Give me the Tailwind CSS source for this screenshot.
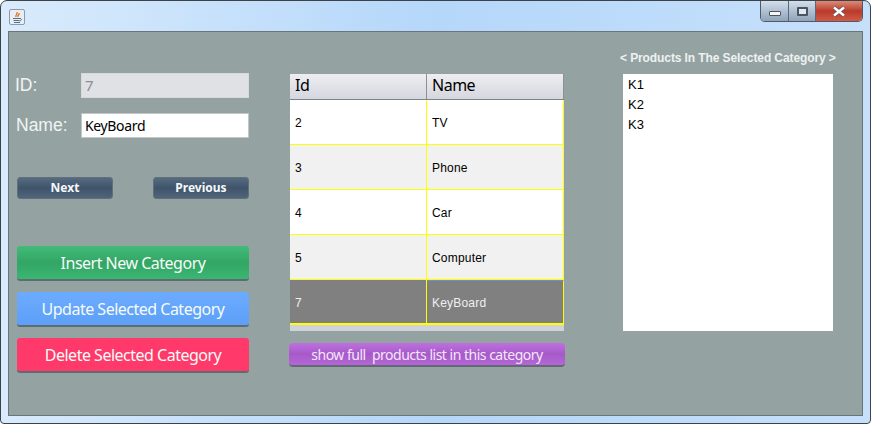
<!DOCTYPE html>
<html>
<head>
<meta charset="utf-8">
<script src="https://cdn.jsdelivr.net/npm/@tailwindcss/browser@4"></script>
</head>
<body class="m-0 overflow-hidden bg-white">
<div class="w-[871px] h-[424px] flex flex-col rounded-t-[7px] rounded-b-[4px] border border-[#3c4247] bg-linear-to-r from-[#d9ebfc] via-[#b5d7fa] to-[#c6e0fb] font-['Liberation_Sans',sans-serif]">
  <div class="h-[30px] shrink-0 flex justify-between pl-[8px] pr-[7px]">
    <div class="mt-[8px] w-[16px] h-[16px] rounded-[2px] border border-[#8a9bac] bg-[#e8eef3] flex items-center justify-center">
      <svg width="12" height="13" viewBox="0 0 12 13"><path d="M6 1 C7 3 4 4 5 6 M8 2 C9 4 6 4 7 6" stroke="#e0701a" stroke-width="1.3" fill="none"/><path d="M2 7.500h7M2.500 9.500h6M3 11.500h6" stroke="#4d7391" stroke-width="1"/><path d="M9 7.500c2 0 2 2-.5 2.500" stroke="#4d7391" fill="none"/></svg>
    </div>
    <div class="flex h-[21px] w-[103px] rounded-b-[5px] border border-t-0 border-[#4f5a66] overflow-hidden">
      <div class="w-[28px] border-r border-[#5d6873] bg-linear-to-b from-[#d3dfec] to-[#8fa3b9] flex items-center justify-center"><div class="mt-[5px] w-[12px] h-[5px] border border-[#4a5560] bg-[#f4f6f8] rounded-[1px]"></div></div>
      <div class="w-[27px] border-r border-[#5d6873] bg-linear-to-b from-[#d3dfec] to-[#8fa3b9] flex items-center justify-center"><div class="w-[11px] h-[9px] border-2 border-[#4a5560] bg-[#e3ebf2] rounded-[1px]"></div></div>
      <div class="flex-1 bg-linear-to-b from-[#dc8a78] via-[#b93a2a] to-[#d05a45] flex items-center justify-center">
        <svg width="16" height="11" viewBox="0 0 16 11"><path d="M3 1.500 13 9.500M13 1.500 3 9.500" stroke="#4a4f55" stroke-width="3.800"/><path d="M3 1.500 13 9.500M13 1.500 3 9.500" stroke="#ffffff" stroke-width="2.600"/></svg>
      </div>
    </div>
  </div>
  <div class="ml-[7px] w-[855px] h-[385px] border border-[#6b7478] bg-[#94a3a1] flex text-white">
    <div class="w-[240px] ml-[8px] pt-[41px] flex flex-col shrink-0">
      <div class="flex items-center h-[25px]">
        <span class="w-[64px] text-[17.500px] text-[#f1f4f4] -ml-[2px] mr-[2px]">ID:</span>
        <div class="w-[168px] h-[25px] bg-[#dfe1e5] border border-[#d6d9dd] flex items-center pl-[3px] text-[15px] text-[#8b8e92] font-['Noto_Sans',sans-serif]">7</div>
      </div>
      <div class="flex items-center h-[25px] mt-[15px]">
        <span class="w-[64px] text-[17.500px] text-[#f1f4f4] -ml-[1px] mr-[1px]">Name:</span>
        <div class="w-[168px] h-[25px] bg-white border border-[#c3c6c8] flex items-center pl-[3px] text-[14px] tracking-[-0.35px] text-black font-['Noto_Sans',sans-serif]">KeyBoard</div>
      </div>
      <div class="flex justify-between w-[232px] mt-[39px]">
        <div class="w-[96px] h-[22px] rounded-[3px] border border-[#5f6f7c] bg-linear-to-b from-[#566b80] via-[#3f546a] to-[#50657a] flex items-center justify-center text-[12px] font-bold text-[#f5f8fb] font-['Noto_Sans',sans-serif]">Next</div>
        <div class="w-[96px] h-[22px] rounded-[3px] border border-[#5f6f7c] bg-linear-to-b from-[#566b80] via-[#3f546a] to-[#50657a] flex items-center justify-center text-[12px] font-bold text-[#f5f8fb] font-['Noto_Sans',sans-serif]">Previous</div>
      </div>
      <div class="w-[232px] mt-[47px] flex flex-col gap-[11px] font-['Noto_Sans',sans-serif] text-[16px] tracking-[-0.5px] text-[#f6fbf8]">
        <div class="h-[35px] rounded-[3px] border-b-2 border-[#5f6b70] bg-linear-to-b from-[#42bc7a] via-[#33a565] to-[#3ab673] flex items-center justify-center">Insert New Category</div>
        <div class="h-[35px] rounded-[3px] border-b-2 border-[#5f6b70] bg-linear-to-b from-[#6cabff] to-[#5da0f8] flex items-center justify-center">Update Selected Category</div>
        <div class="h-[35px] rounded-[3px] border-b-2 border-[#5f6b70] bg-[#ff3a6b] flex items-center justify-center">Delete Selected Category</div>
      </div>
    </div>
    <div class="w-[276px] ml-[32px] pt-[42px] shrink-0 flex flex-col">
      <div class="ml-[1px] w-[274px] h-[257px] bg-[#cfd2da] flex flex-col">
        <div class="h-[26px] shrink-0 flex border-b border-[#7c8088] bg-linear-to-b from-[#eeeef1] to-[#d5d7df] text-[16px] tracking-[-0.5px] leading-[22px] text-black font-['Noto_Sans',sans-serif]">
          <div class="w-[137px] border-r border-[#8c9097] pl-[5px] flex items-start">Id</div>
          <div class="flex-1 border-r border-[#8c9097] pl-[5px] flex items-start">Name</div>
        </div>
        <div class="h-[45px] flex bg-white text-[12px] tracking-[0.2px] text-black border-b border-[#ffff00]"><div class="w-[137px] border-r border-[#ffff00] pl-[5px] pt-[2px] flex items-center">2</div><div class="flex-1 border-r border-[#ffff00] pl-[5px] pt-[2px] flex items-center">TV</div></div>
        <div class="h-[45px] flex bg-[#f1f1f1] text-[12px] tracking-[0.2px] text-black border-b border-[#ffff00]"><div class="w-[137px] border-r border-[#ffff00] pl-[5px] pt-[2px] flex items-center">3</div><div class="flex-1 border-r border-[#ffff00] pl-[5px] pt-[2px] flex items-center">Phone</div></div>
        <div class="h-[45px] flex bg-white text-[12px] tracking-[0.2px] text-black border-b border-[#ffff00]"><div class="w-[137px] border-r border-[#ffff00] pl-[5px] pt-[2px] flex items-center">4</div><div class="flex-1 border-r border-[#ffff00] pl-[5px] pt-[2px] flex items-center">Car</div></div>
        <div class="h-[45px] flex bg-[#f1f1f1] text-[12px] tracking-[0.2px] text-black border-b border-[#ffff00]"><div class="w-[137px] border-r border-[#ffff00] pl-[5px] pt-[2px] flex items-center">5</div><div class="flex-1 border-r border-[#ffff00] pl-[5px] pt-[2px] flex items-center">Computer</div></div>
        <div class="h-[45px] flex bg-[#808080] text-[12px] tracking-[0.2px] text-[#f0f0f0] border-b-2 border-[#ffff00]"><div class="w-[137px] border-r border-[#ffff00] pl-[5px] pt-[2px] flex items-center">7</div><div class="flex-1 border-r border-[#ffff00] border-t border-t-[#6d93b8] pl-[5px] pt-[2px] flex items-center">KeyBoard</div></div>
      </div>
      <div class="mt-[12px] h-[24px] rounded-[4px] border-b-2 border-[#5f6b70] bg-linear-to-b from-[#bf70e0] via-[#a65ac8] to-[#b566d8] flex items-center justify-center text-[14px] tracking-[-0.5px] text-[#f4e6fa] font-['Noto_Sans',sans-serif] whitespace-pre">show full  products list in this category</div>
    </div>
    <div class="ml-[53px] w-[224px] pt-[17px] flex flex-col shrink-0">
      <div class="h-[17px] flex items-center text-[12px] tracking-[-0.1px] font-bold text-[#eef1f1] whitespace-nowrap pl-[2px]">&lt; Products In The Selected Category &gt;</div>
      <div class="mt-[8px] ml-[5px] w-[210px] h-[257px] bg-white pt-[1px] pl-[5px] text-[13px] text-black leading-[20px]">
        <div>K1</div><div>K2</div><div>K3</div>
      </div>
    </div>
  </div>
</div>
</body>
</html>
